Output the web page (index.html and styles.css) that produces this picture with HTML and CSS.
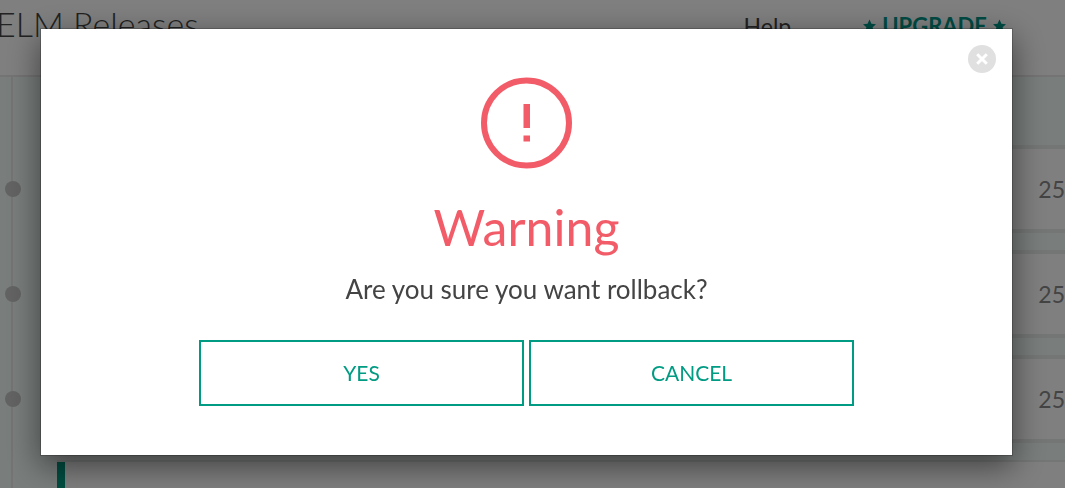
FILE: index.html
```
<!DOCTYPE html>
<html lang="en">
<head>
<meta charset="utf-8">
<title>ELM Releases</title>
<link rel="stylesheet" href="styles.css">
</head>
<body>
<div class="page">
  <header class="header">
    <h1 class="header-title">ELM Releases</h1>
    <nav class="nav">
      <a class="nav-help" href="#">Help</a>
      <a class="nav-upgrade" href="#">
        <svg class="star" viewBox="0 0 24 24" aria-hidden="true"><path d="M12 0l3.600 7.800 8.400 1-6.200 5.700 1.700 8.300L12 18.700l-7.500 4.100 1.700-8.300L0 8.800l8.400-1z"/></svg>
        <span>UPGRADE</span>
        <svg class="star" viewBox="0 0 24 24" aria-hidden="true"><path d="M12 0l3.600 7.800 8.400 1-6.200 5.700 1.700 8.300L12 18.700l-7.500 4.100 1.700-8.300L0 8.800l8.400-1z"/></svg>
      </a>
    </nav>
  </header>
  <main class="releases">
    <ul class="timeline">
      <li class="entry"><span class="dot"></span><div class="card">25</div></li>
      <li class="entry"><span class="dot"></span><div class="card">25</div></li>
      <li class="entry"><span class="dot"></span><div class="card">25</div></li>
      <li class="entry"><div class="card card-current"></div></li>
    </ul>
  </main>
</div>
<div class="overlay">
  <section class="modal" role="dialog" aria-modal="true" aria-labelledby="modal-title">
    <button class="close" type="button" aria-label="Close">
      <svg viewBox="0 0 28 28" aria-hidden="true"><circle cx="14" cy="14" r="14"/><path d="M9.200 9.200l9.600 9.600M18.800 9.200l-9.600 9.600"/></svg>
    </button>
    <svg class="warning-icon" viewBox="0 0 92 92" aria-hidden="true"><circle cx="45.500" cy="46" r="42.500"/><path d="M42.500 27h6.500v24h-6.500zM42.500 58.500h6.500v6h-6.500z"/></svg>
    <h2 class="modal-title" id="modal-title">Warning</h2>
    <p class="modal-text">Are you sure you want rollback?</p>
    <div class="actions">
      <button class="action" type="button">YES</button>
      <button class="action" type="button">CANCEL</button>
    </div>
  </section>
</div>
</body>
</html>
```
FILE: styles.css
```
* {
  box-sizing: border-box;
}

body {
  margin: 0;
  font-family: Lato, "Open Sans", sans-serif;
  color: #444;
  background: #f2fcf8;
}

.page {
  height: 100vh;
  overflow: hidden;
}

.header {
  display: flex;
  justify-content: space-between;
  height: 77px;
  padding-right: 59px;
  background: #fff;
  border-bottom: 2px solid #e8e8e8;
}

.header-title {
  margin: 3px 0 0 -4px;
  font-size: 34px;
  line-height: 42px;
  font-weight: 300;
  white-space: nowrap;
}

.nav {
  display: flex;
  gap: 72px;
  padding-top: 12px;
  font-size: 22px;
  line-height: 28px;
}

.nav a {
  text-decoration: none;
}

.nav-help {
  color: #444;
  font-size: 23px;
}

.nav-upgrade {
  display: flex;
  gap: 6px;
  color: #009688;
  font-weight: 700;
}

.star {
  width: 13px;
  height: 28px;
  fill: #009688;
}

.timeline {
  display: flex;
  flex-direction: column;
  gap: 17px;
  margin: 0 0 0 11px;
  padding: 68px 0 0;
  list-style: none;
  border-left: 2px solid #e8e8e8;
}

.entry {
  display: flex;
  align-items: center;
}

.dot {
  flex: none;
  width: 16px;
  height: 16px;
  margin-left: -8px;
  border-radius: 50%;
  background: #c6c6c6;
}

.card {
  flex: 1;
  height: 88px;
  margin-left: 36px;
  border: 4px solid #e8eaea;
  border-right: 0;
  background: #fff;
  color: #888;
  font-size: 23px;
  line-height: 80px;
  text-align: right;
}

.card-current {
  margin-left: 44px;
  border-width: 2px 0;
}

.card-current::before {
  content: "";
  display: block;
  width: 8px;
  height: 100%;
  background: #009b83;
}

.overlay {
  position: fixed;
  inset: 0;
  padding: 28px 52px 0 40px;
  background: rgba(0, 0, 0, 0.5);
}

.modal {
  position: relative;
  display: flex;
  flex-direction: column;
  align-items: center;
  padding: 48px 16px 49px;
  border: 1px solid rgba(0, 0, 0, 0.2);
  background: #fff;
  background-clip: padding-box;
  box-shadow: 0 10px 30px rgba(0, 0, 0, 0.5);
}

.close {
  position: absolute;
  top: 16px;
  right: 16px;
  width: 28px;
  height: 28px;
  padding: 0;
  border: 0;
  background: none;
}

.close svg {
  display: block;
  fill: #e0e0e0;
  stroke-width: 3;
}

.close path {
  stroke: #fff;
}

.warning-icon {
  width: 92px;
  height: 92px;
  fill: #f25c68;
}

.warning-icon circle {
  fill: none;
  stroke: #f25c68;
  stroke-width: 6;
}

.modal-title {
  margin: 26px 0 0;
  color: #f25c68;
  font-size: 50px;
  line-height: 64px;
  font-weight: 400;
}

.modal-text {
  margin: 14px 0 0;
  font-size: 26px;
  line-height: 32px;
}

.actions {
  display: flex;
  gap: 5px;
  width: 70%;
  max-width: 655px;
  margin-top: 35px;
}

.action {
  flex: 1;
  height: 66px;
  padding: 0 0 2px;
  border: 2px solid #009b83;
  background: #fff;
  color: #009b83;
  font-family: inherit;
  font-size: 21px;
}
```
